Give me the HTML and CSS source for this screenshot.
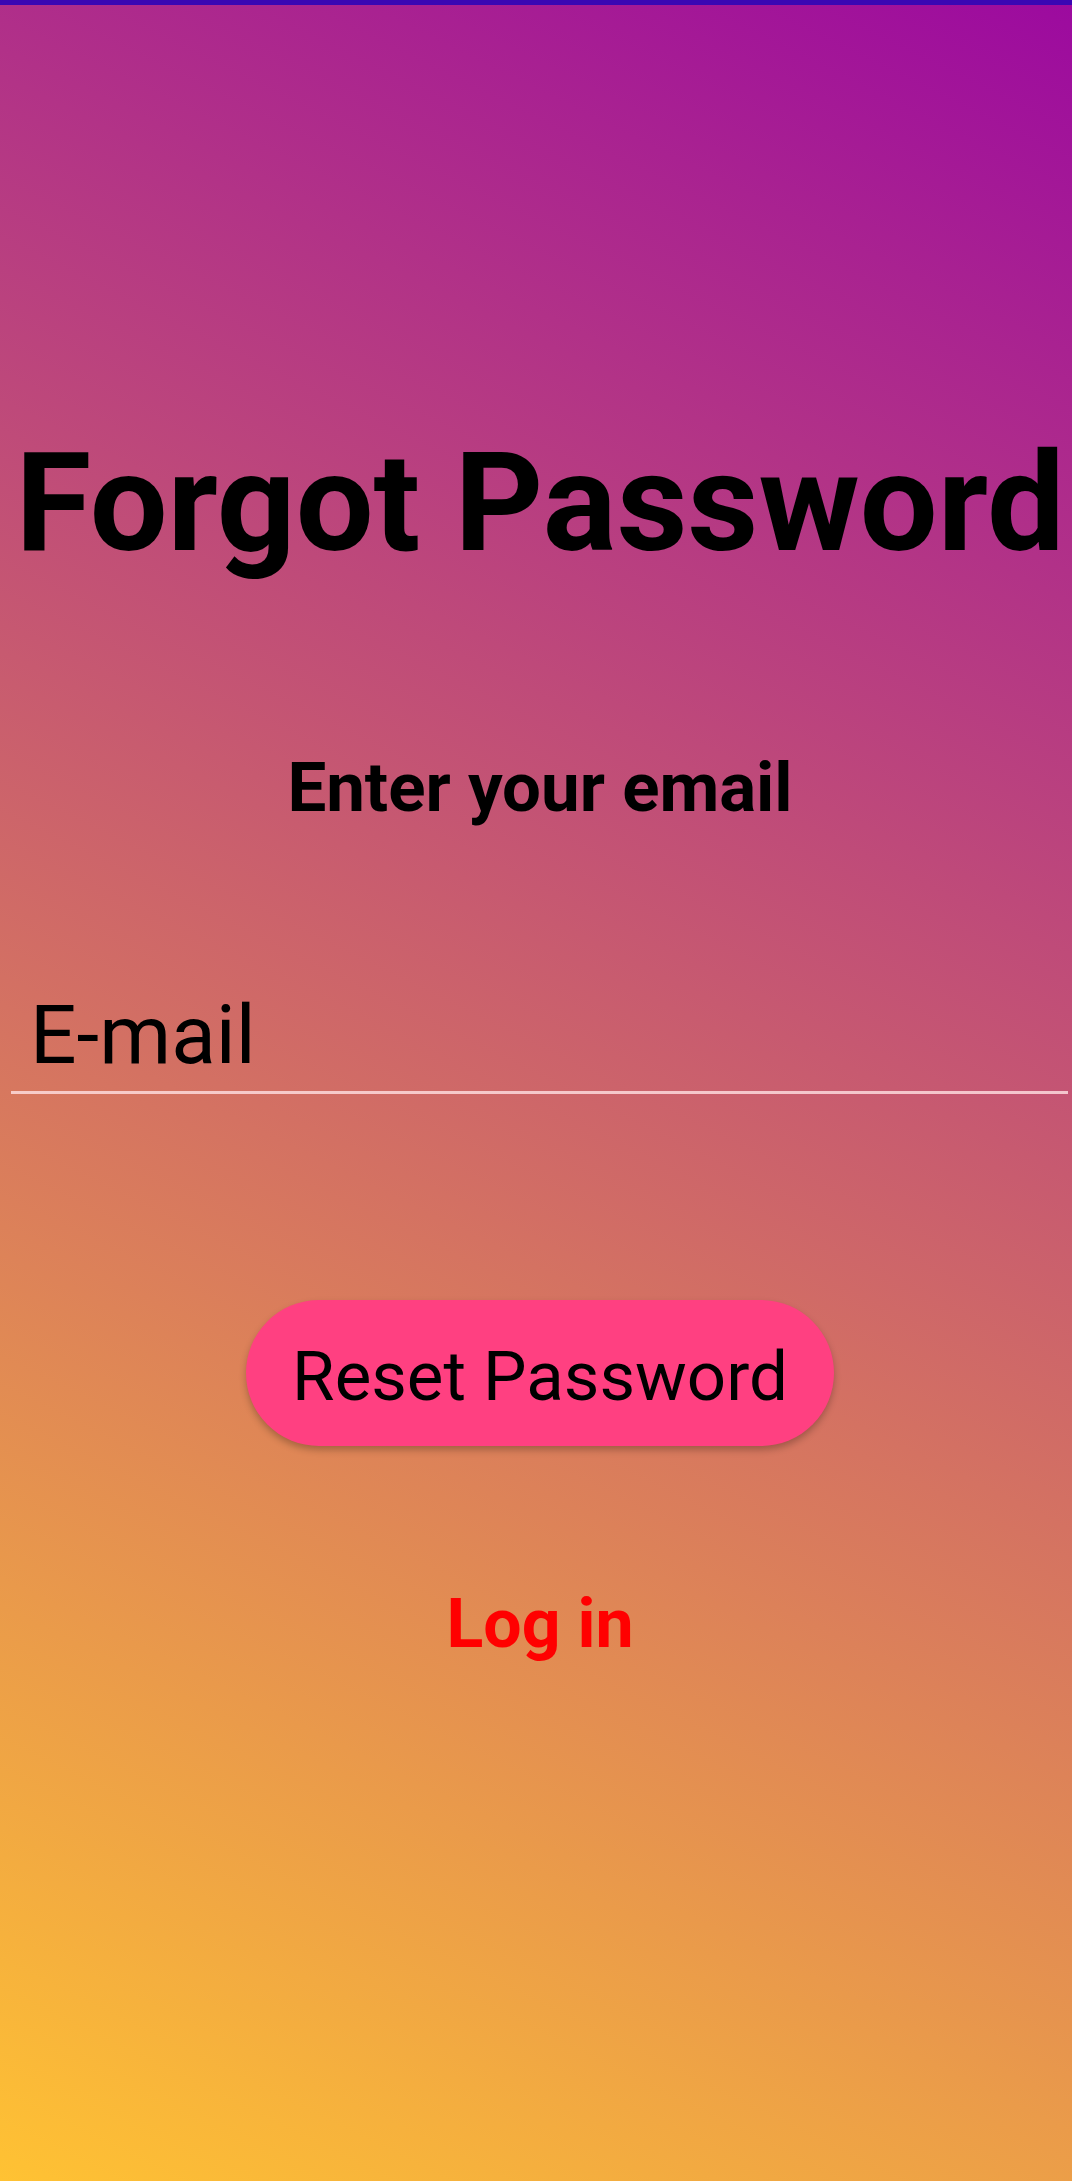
FILE: index.html
```html
<!DOCTYPE html>
<html lang="en">
<head>
<meta charset="utf-8">
<title>Forgot Password</title>
<link rel="stylesheet" href="styles.css">
</head>
<body>
<div class="topbar"></div>
<main class="screen">
  <h1 class="title">Forgot Password</h1>
  <p class="subtitle">Enter your email</p>
  <div class="field">
    <span class="field-hint">E-mail</span>
  </div>
  <button class="reset-btn" type="button">Reset Password</button>
  <a class="login-link" href="#">Log in</a>
</main>
</body>
</html>
```
FILE: styles.css
```css
html, body {
  margin: 0;
  padding: 0;
  height: 100%;
}

body {
  font-family: Roboto, "Liberation Sans", sans-serif;
  background: linear-gradient(26.17deg, #ffc233 0%, #9c0a9f 100%);
  color: #000;
  min-height: 2181px;
}

.topbar {
  height: 5px;
  background: #3a07b3;
}

.screen {
  display: flex;
  flex-direction: column;
  align-items: center;
  padding-left: 8px;
}

.title {
  margin: 429px 0 0;
  font-size: 138px;
  line-height: 138px;
  font-weight: 700;
  white-space: nowrap;
}

.subtitle {
  margin: 181px 0 0;
  font-size: 69px;
  line-height: 69px;
  font-weight: 700;
}

.field {
  align-self: stretch;
  margin: 172px 4px 0 3px;
  padding: 0 0 15px 19px;
  border-bottom: 3px solid rgba(255, 225, 228, 0.8);
}

.field-hint {
  display: block;
  font-size: 82px;
  line-height: 82px;
  font-weight: 400;
}

.reset-btn {
  margin-top: 206px;
  height: 146px;
  padding: 43px 46px 35px;
  border: 0;
  border-radius: 73px;
  background: #ff4081;
  color: #000;
  font-family: Roboto, "Liberation Sans", sans-serif;
  font-size: 69px;
  line-height: 68px;
  font-weight: 400;
  box-shadow: 0 4px 7px rgba(0, 0, 0, 0.25);
  box-sizing: border-box;
}

.login-link {
  margin-top: 144px;
  font-size: 68px;
  line-height: 68px;
  font-weight: 700;
  color: #ff0000;
  text-decoration: none;
}
```
